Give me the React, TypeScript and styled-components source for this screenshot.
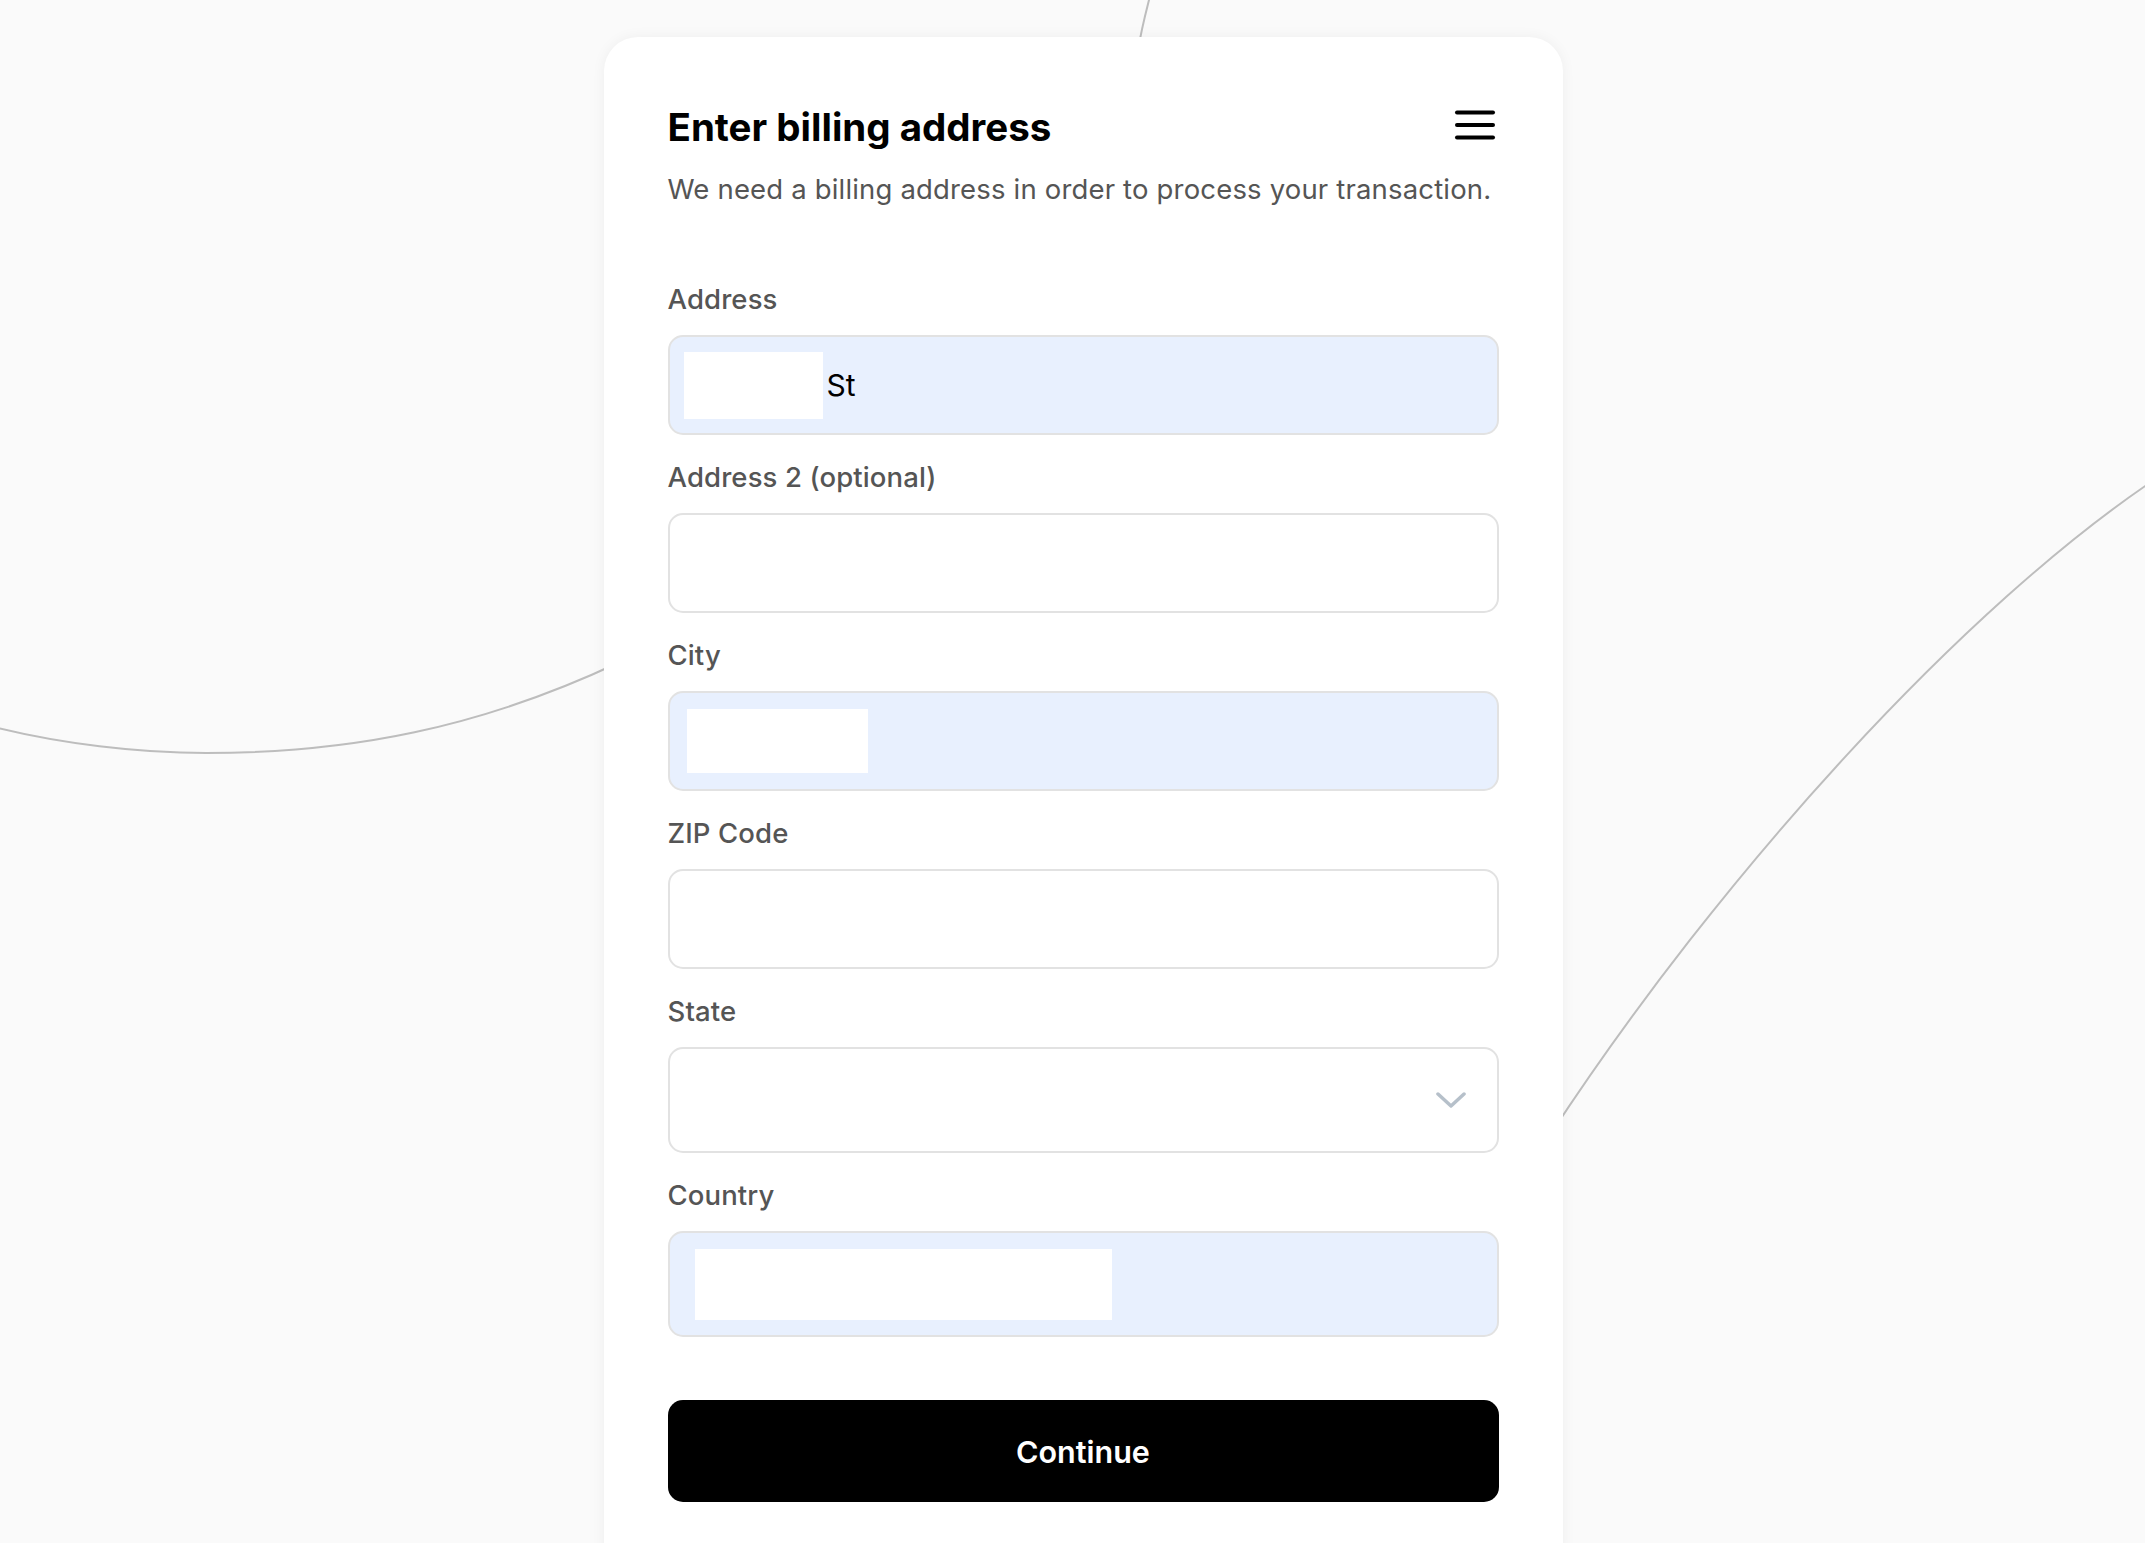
import React from "react";
import styled, { createGlobalStyle } from "styled-components";

const GlobalStyle = createGlobalStyle`
  html, body {
    margin: 0;
    padding: 0;
    height: 100%;
    overflow: hidden;
    background: #fafafa;
    font-family: Inter, "Noto Sans", "Liberation Sans", sans-serif;
  }
`;

const Page = styled.div`
  position: relative;
  width: 100%;
  height: 100vh;
  display: flex;
  justify-content: center;
  align-items: flex-start;
  padding: 37px 0 0 21px;
  box-sizing: border-box;
`;

const Backdrop = styled.svg`
  position: absolute;
  inset: 0;
  width: 100%;
  height: 100%;
  z-index: 0;
`;

const Card = styled.div`
  position: relative;
  z-index: 1;
  width: 959px;
  box-sizing: border-box;
  padding: 67px 64px 80px;
  background: #ffffff;
  border-radius: 34px;
  box-shadow: 0 0 14px rgba(0, 0, 0, 0.05);
  display: flex;
  flex-direction: column;
`;

const Header = styled.div`
  display: flex;
  align-items: center;
  justify-content: space-between;
`;

const Title = styled.h1`
  margin: 0;
  font-size: 38.5px;
  line-height: 46px;
  font-weight: 700;
  letter-spacing: 0;
  color: #000;
`;

const MenuButton = styled.button`
  width: 44px;
  height: 40px;
  padding: 0;
  margin: 0 2px 5px 0;
  border: none;
  background: none;
  display: flex;
  align-items: center;
  justify-content: center;
`;

const Subtitle = styled.p`
  margin: 20px 0 72px;
  font-size: 27.5px;
  line-height: 38px;
  letter-spacing: 0.17px;
  color: #555;
`;

const FieldGroup = styled.div`
  display: flex;
  flex-direction: column;
  margin-bottom: 23px;
`;

const Label = styled.label`
  font-size: 27.5px;
  line-height: 38px;
  font-weight: 500;
  letter-spacing: 0.12px;
  color: #555;
  margin-bottom: 17px;
`;

const Input = styled.div<{ $filled?: boolean; $h?: number }>`
  height: ${(p) => p.$h ?? 100}px;
  box-sizing: border-box;
  border: 2px solid #e2e2e2;
  border-radius: 15px;
  background: ${(p) => (p.$filled ? "#e8f0fe" : "#ffffff")};
  display: flex;
  align-items: center;
  padding: 0 31px 0 14px;
  font-size: 30px;
  color: #000;
`;

const Redact = styled.span<{ $w: number; $h: number; $ml: number }>`
  display: inline-block;
  width: ${(p) => p.$w}px;
  height: ${(p) => p.$h}px;
  margin-left: ${(p) => p.$ml}px;
  background: #ffffff;
  flex-shrink: 0;
`;

const Value = styled.span`
  margin-left: 4px;
`;

const Chevron = styled.svg`
  margin-left: auto;
`;

const Continue = styled.button`
  margin-top: 40px;
  height: 102px;
  border: none;
  border-radius: 15px;
  background: #000;
  color: #fff;
  font-family: inherit;
  font-size: 30.5px;
  font-weight: 600;
`;

export default function App() {
  return (
    <>
      <GlobalStyle />
      <Page>
        <Backdrop viewBox="0 0 2145 1543" preserveAspectRatio="none">
          <g fill="none" stroke="#bdbdbd" strokeWidth="2">
            <path d="M -10 726 C 60 744, 140 753, 206 753 C 350 753, 480 728, 620 662" />
            <path d="M 1150 -4 C 1146 12, 1142 26, 1138 50" />
            <path d="M 2160 476 C 1965 605, 1720 875, 1550 1135" />
          </g>
        </Backdrop>
        <Card>
          <Header>
            <Title>Enter billing address</Title>
            <MenuButton aria-label="Menu">
              <svg width="42" height="30" viewBox="0 0 42 30">
                <g stroke="#000" strokeWidth="4" strokeLinecap="round">
                  <line x1="3" y1="2.5" x2="39" y2="2.5" />
                  <line x1="3" y1="15" x2="39" y2="15" />
                  <line x1="3" y1="27.5" x2="39" y2="27.5" />
                </g>
              </svg>
            </MenuButton>
          </Header>
          <Subtitle>We need a billing address in order to process your transaction.</Subtitle>

          <FieldGroup>
            <Label>Address</Label>
            <Input $filled>
              <Redact $w={139} $h={67} $ml={0} />
              <Value>St</Value>
            </Input>
          </FieldGroup>

          <FieldGroup>
            <Label>Address 2 (optional)</Label>
            <Input />
          </FieldGroup>

          <FieldGroup>
            <Label>City</Label>
            <Input $filled>
              <Redact $w={181} $h={64} $ml={3} />
            </Input>
          </FieldGroup>

          <FieldGroup>
            <Label>ZIP Code</Label>
            <Input />
          </FieldGroup>

          <FieldGroup>
            <Label>State</Label>
            <Input $h={106}>
              <Chevron width="30" height="17" viewBox="0 0 30 17">
                <path d="M 2 2 L 15 14 L 28 2" fill="none" stroke="#b6c0ca" strokeWidth="3.5" strokeLinecap="round" strokeLinejoin="round" />
              </Chevron>
            </Input>
          </FieldGroup>

          <FieldGroup>
            <Label>Country</Label>
            <Input $filled $h={106}>
              <Redact $w={417} $h={71} $ml={11} />
            </Input>
          </FieldGroup>

          <Continue>Continue</Continue>
        </Card>
      </Page>
    </>
  );
}
